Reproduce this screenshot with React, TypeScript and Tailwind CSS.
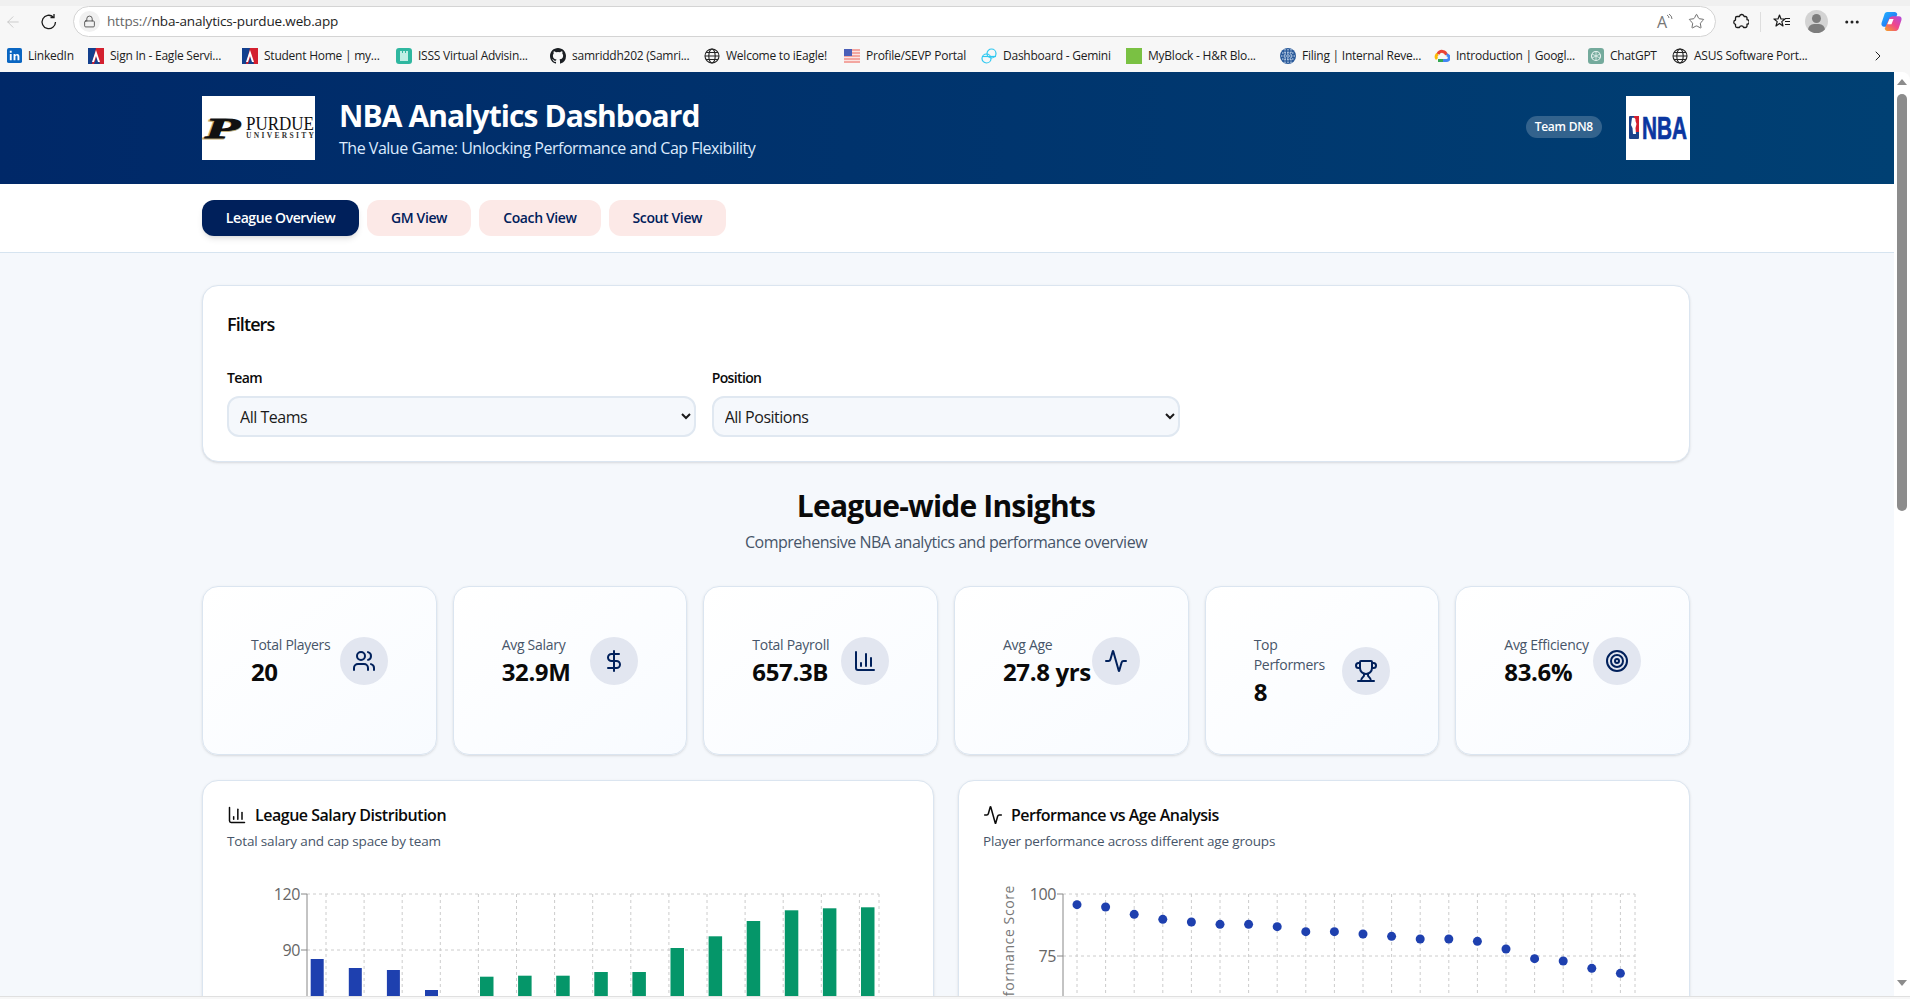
import { Activity, ChartColumn, ChevronRight, DollarSign, Lock, MoreHorizontal, Star, Target, Trophy, Users, ArrowLeft } from "lucide-react";
import type { ReactNode } from "react";

const Globe = () => (
  <svg width="16" height="16" viewBox="0 0 16 16" fill="none" stroke="#222" strokeWidth="1.1">
    <circle cx="8" cy="8" r="7" />
    <ellipse cx="8" cy="8" rx="3.2" ry="7" />
    <path d="M1 8h14M2 4.5h12M2 11.5h12" />
  </svg>
);

const AtlasIcon = () => (
  <svg width="16" height="16" viewBox="0 0 16 16">
    <rect width="16" height="16" fill="#13408e" />
    <path d="M8 0h8v16h-4L9 8 6 16H4z" fill="#d3202f" />
    <path d="M8 2l4 12h-2L8 8l-2 6H4z" fill="#fff" />
  </svg>
);

const bookmarks: { label: string; width: string; icon: ReactNode }[] = [
  {
    label: "LinkedIn",
    width: "w-[43px]",
    icon: (
      <svg width="15" height="15" viewBox="0 0 16 16">
        <rect width="16" height="16" rx="2" fill="#0a66c2" />
        <path d="M3 6.5h2V13H3zM3 3h2v2H3zM7 6.5h2v1c.5-.8 1.2-1.2 2-1.2 1.500 0 2.200 1 2.200 2.700v4h-2V9.500c0-.9-.3-1.400-1-1.400-.8 0-1.200.6-1.200 1.500V13H7z" fill="#fff" />
      </svg>
    ),
  },
  { label: "Sign In - Eagle Servi...", width: "w-[115px]", icon: <AtlasIcon /> },
  { label: "Student Home | my...", width: "w-[115px]", icon: <AtlasIcon /> },
  {
    label: "ISSS Virtual Advisin...",
    width: "w-[115px]",
    icon: (
      <svg width="16" height="16" viewBox="0 0 16 16">
        <rect width="16" height="16" rx="3" fill="#2fb7a0" />
        <path d="M4 3h2v2h1V3h2v2h1V3h2v10H4z" fill="#bfeee4" />
      </svg>
    ),
  },
  {
    label: "samriddh202 (Samri...",
    width: "w-[115px]",
    icon: (
      <svg width="16" height="16" viewBox="0 0 16 16" fill="#1b1f23">
        <path d="M8 0C3.580 0 0 3.580 0 8c0 3.540 2.290 6.530 5.470 7.590.4.070.55-.17.55-.38v-1.340c-2.230.48-2.700-1.070-2.700-1.070-.36-.92-.89-1.170-.89-1.170-.73-.5.05-.49.05-.49.8.060 1.230.82 1.230.82.710 1.220 1.870.87 2.330.66.070-.52.280-.87.510-1.070-1.780-.2-3.640-.89-3.640-3.950 0-.87.310-1.590.820-2.150-.080-.2-.360-1.020.080-2.120 0 0 .670-.21 2.200.820a7.700 7.700 0 0 1 4 0c1.530-1.040 2.200-.820 2.200-.820.440 1.100.160 1.920.080 2.120.510.560.820 1.270.820 2.150 0 3.070-1.870 3.750-3.650 3.950.290.250.540.730.540 1.480v2.200c0 .210.150.460.550.380A8.010 8.010 0 0 0 16 8c0-4.420-3.580-8-8-8z" />
      </svg>
    ),
  },
  { label: "Welcome to iEagle!", width: "w-[101px]", icon: <Globe /> },
  {
    label: "Profile/SEVP Portal",
    width: "w-[98px]",
    icon: (
      <svg width="16" height="16" viewBox="0 0 16 16">
        <rect y="1" width="16" height="14" fill="#f3a6a0" />
        <path d="M0 3.500h16M0 6.500h16M0 9.500h16M0 12.500h16" stroke="#fbe4e2" strokeWidth="1.200" />
        <rect y="1" width="8" height="7" fill="#4a5fb8" />
      </svg>
    ),
  },
  {
    label: "Dashboard - Gemini",
    width: "w-[106px]",
    icon: (
      <svg width="16" height="16" viewBox="0 0 16 16" fill="none" stroke="#2fc8f0" strokeWidth="1.200">
        <circle cx="10.500" cy="5.500" r="4.500" />
        <circle cx="5.500" cy="10.500" r="4.500" />
        <path d="M1 8.500h14" />
      </svg>
    ),
  },
  {
    label: "MyBlock - H&R Blo...",
    width: "w-[115px]",
    icon: <div className="h-4 w-4 bg-[#7ac143]" />,
  },
  {
    label: "Filing | Internal Reve...",
    width: "w-[115px]",
    icon: (
      <svg width="16" height="16" viewBox="0 0 16 16">
        <circle cx="8" cy="8" r="8" fill="#2a5a9a" />
        <path d="M2 5h12M1 8h14M2 11h12M5 1v14M8 1v14M11 1v14" stroke="#d7e4f3" strokeWidth="1" strokeDasharray="1.500 1" />
      </svg>
    ),
  },
  {
    label: "Introduction | Googl...",
    width: "w-[115px]",
    icon: (
      <svg width="16" height="16" viewBox="0 0 16 16" fill="none" strokeWidth="3">
        <path d="M3 11a3 3 0 0 1 1-5" stroke="#fbbc04" />
        <path d="M4 6a4.500 4.500 0 0 1 8.500 1" stroke="#ea4335" />
        <path d="M12.500 7a2.500 2.500 0 0 1 0 5.500H9" stroke="#4285f4" />
        <path d="M9 12.500H4" stroke="#34a853" />
      </svg>
    ),
  },
  {
    label: "ChatGPT",
    width: "w-[45px]",
    icon: (
      <svg width="16" height="16" viewBox="0 0 16 16" fill="none">
        <rect width="16" height="16" rx="3" fill="#74aa9c" />
        <circle cx="8" cy="8" r="4.500" stroke="#e6f2ef" strokeWidth="1.200" />
        <path d="M8 3.500v9M4 6l8 4M4 10l8-4" stroke="#e6f2ef" strokeWidth=".8" />
      </svg>
    ),
  },
  { label: "ASUS Software Port...", width: "w-[112px]", icon: <Globe /> },
];

const BrowserChrome = () => (
  <div className="bg-[#f7f7f7] shrink-0">
    <div className="h-[6px] bg-[#f0f0f0]" />
    <div className="flex items-center h-[31px]">
      <div className="w-[26px] flex justify-center">
        <ArrowLeft size={18} strokeWidth={1.1} className="text-[#c4c4c4]" />
      </div>
      <div className="w-[20px] ml-[13px] flex justify-center">
        <svg width="18" height="18" viewBox="0 0 18 18" fill="none" stroke="#1a1a1a" strokeWidth="1.300">
          <path d="M15.500 9a6.700 6.700 0 1 1-2.200-5" />
          <path d="M14 1v3.500h-3.500" />
        </svg>
      </div>
      <div className="ml-[14px] w-[1643px] h-[31px] bg-white border border-[#d4d4d4] rounded-full flex items-center pl-[5px] pr-[10px]">
        <div className="w-[21px] h-[21px] rounded-full bg-[#f1f1f1] flex items-center justify-center">
          <Lock size={13} strokeWidth={1.4} className="text-[#333]" />
        </div>
        <div className="ml-[7px] pt-[1px] text-[13.5px] leading-none text-[#1d1d1d] tracking-[-0.012em]">
          <span className="text-[#666]">https://</span>nba-analytics-purdue.web.app
        </div>
        <div className="ml-auto flex items-center gap-[13px]">
          <div className="flex items-start w-[18px] text-[16px] leading-none text-[#777]">
            A
            <svg width="7" height="9" viewBox="0 0 7 9" fill="none" stroke="#777" strokeWidth="1" className="shrink-0 -ml-[1px]">
              <path d="M1 1a3.500 3.500 0 0 1 2 3M3 0a6 6 0 0 1 3 5" />
            </svg>
          </div>
          <Star size={17} strokeWidth={1.2} className="text-[#555]" />
        </div>
      </div>
      <div className="ml-[14px] w-[20px] flex justify-center">
        <svg width="17" height="17" viewBox="0 0 17 17" fill="none" stroke="#1a1a1a" strokeWidth="1.300" strokeLinejoin="round">
          <path d="M6 3.500h1.500a2.300 2.300 0 0 1 4.400-.6c.2.2.2.4.2.6h1.400a1.500 1.500 0 0 1 1.500 1.500v1.700a2.200 2.200 0 0 1 0 4.400v1.900a1.500 1.500 0 0 1-1.500 1.500h-1.900a2.200 2.200 0 0 0-4.200 0H5a1.500 1.500 0 0 1-1.500-1.500v-1.700a2.200 2.200 0 0 1 0-4.300V5A1.500 1.500 0 0 1 5 3.500z" />
        </svg>
      </div>
      <div className="ml-[10px] w-px h-[20px] bg-[#dedede]" />
      <div className="ml-[11px] w-[20px] flex justify-center">
        <svg width="18" height="18" viewBox="0 0 18 18" fill="none" stroke="#1a1a1a" strokeWidth="1.200" strokeLinejoin="round">
          <path d="M6.500 2l1.500 4h4l-3.200 2.600 1.200 4.400-3.500-2.600L3 13l1.200-4.400L1 6h4z" />
          <path d="M12 8.500h5M12 11.500h5M12 5.500h5" />
        </svg>
      </div>
      <div className="relative ml-[13px] w-[23px] h-[23px] rounded-full bg-[#d3d3d3] overflow-hidden">
        <div className="absolute left-[7px] top-[4px] w-[9px] h-[9px] rounded-full bg-[#7d7d7d]" />
        <div className="absolute left-[3px] top-[14px] w-[17px] h-[12px] rounded-full bg-[#7d7d7d]" />
      </div>
      <div className="ml-[15px] w-[18px] flex justify-center">
        <MoreHorizontal size={18} strokeWidth={2} className="text-[#222]" />
      </div>
      <div className="ml-[20px]">
        <svg width="21" height="21" viewBox="0 0 20 20">
          <defs>
            <linearGradient id="cp1" x1="0" y1="0" x2="1" y2="1">
              <stop offset="0" stopColor="#1fb6ff" />
              <stop offset="1" stopColor="#2a5bf0" />
            </linearGradient>
            <linearGradient id="cp2" x1="0" y1="1" x2="1" y2="0">
              <stop offset="0" stopColor="#f5a623" />
              <stop offset="0.5" stopColor="#f0468c" />
              <stop offset="1" stopColor="#b14be0" />
            </linearGradient>
          </defs>
          <path d="M6 1h7c1.500 0 2 1 2.500 2L12 13c-.5 1.500-1.500 2-3 2H3c-2 0-3-1.500-2.500-3.500L3 4c.5-2 1.500-3 3-3z" fill="url(#cp1)" />
          <path d="M13 5h4c2 0 3 1.500 2.500 3.500L17 16c-.5 2-1.500 3-3 3H6c-1.500 0-2-1-2.500-2L8 7c.5-1.500 2-2 5-2z" fill="url(#cp2)" />
          <path d="M8 7.500h4l-2 5H6z" fill="#fff" />
        </svg>
      </div>
    </div>
    <div className="flex items-center h-[35px] pl-[6px] pt-[2px] relative">
      {bookmarks.map((b) => (
        <div key={b.label} className="flex items-center shrink-0 mr-[17px]">
          <div className="w-4 flex justify-center">{b.icon}</div>
          <div className={`${b.width} ml-[6px] text-[12px] leading-none text-[#1c1c1c] whitespace-nowrap tracking-[-0.02em]`}>{b.label}</div>
        </div>
      ))}
      <ChevronRight size={16} strokeWidth={1.5} className="absolute left-[1870px] text-[#222]" />
    </div>
  </div>
);

const PurdueLogo = () => (
  <svg width="113" height="64" viewBox="0 0 113 64" className="bg-white shrink-0 overflow-visible">
    <text x="1" y="43" fontFamily="Liberation Serif" fontWeight="700" fontStyle="italic" fontSize="30" fill="#c5b078" stroke="#c5b078" strokeWidth="1" textLength="37" lengthAdjust="spacingAndGlyphs">P</text>
    <text x="3" y="42" fontFamily="Liberation Serif" fontWeight="700" fontStyle="italic" fontSize="30" fill="#111" stroke="#111" strokeWidth="1" textLength="35" lengthAdjust="spacingAndGlyphs">P</text>
    <text x="44" y="34" fontFamily="Liberation Serif" fontSize="18" fill="#111" textLength="68" lengthAdjust="spacingAndGlyphs">PURDUE</text>
    <text x="44" y="42" fontFamily="Liberation Serif" fontWeight="700" fontSize="7.500" fill="#333" textLength="68">UNIVERSITY</text>
  </svg>
);

const NbaLogo = () => (
  <svg width="64" height="64" viewBox="0 0 64 64" className="bg-white shrink-0 overflow-visible">
    <rect x="3" y="20" width="10" height="23" rx="1" fill="#1d428a" />
    <rect x="8" y="20" width="5" height="16" fill="#d3202f" />
    <path d="M6 22c2-1 4 0 3.500 3l1 3-1 4 .5 6H7l-.5-6L5 29z" fill="#fff" />
    <text x="16" y="43" fontFamily="Liberation Sans" fontWeight="700" fontSize="31" fill="#0a36a0" stroke="#0a36a0" strokeWidth=".7" textLength="45" lengthAdjust="spacingAndGlyphs">NBA</text>
  </svg>
);

const tabs = [
  { label: "League Overview", active: true },
  { label: "GM View", active: false },
  { label: "Coach View", active: false },
  { label: "Scout View", active: false },
];

const stats = [
  { label: "Total Players", value: "20", Icon: Users },
  { label: "Avg Salary", value: "32.9M", Icon: DollarSign },
  { label: "Total Payroll", value: "657.3B", Icon: ChartColumn },
  { label: "Avg Age", value: "27.8 yrs", Icon: Activity },
  { label: "Top\nPerformers", value: "8", Icon: Trophy },
  { label: "Avg Efficiency", value: "83.6%", Icon: Target },
];

const StatCard = ({ label, value, Icon }: (typeof stats)[number]) => (
  <div className="bg-linear-to-br from-white to-[#f8fbff] border border-[#dbe5f0] rounded-2xl shadow-sm p-12 h-[169px]">
    <div className="flex items-center justify-between">
      <div className="min-w-0">
        <p className="text-[14px] leading-5 font-medium text-[#475569] tracking-[-0.02em] whitespace-pre">{label}</p>
        <p className="mt-[1px] text-[24px] leading-[31px] font-bold text-[#0a0a0a] tracking-[-0.015em] whitespace-nowrap">{value}</p>
      </div>
      <div className="w-12 h-12 rounded-full bg-[#e2e6f0] flex items-center justify-center shrink-0">
        <Icon size={24} strokeWidth={2} className="text-[#00205b]" />
      </div>
    </div>
  </div>
);

const SalaryChart = () => {
  const gridX = Array.from({ length: 15 }, (_, i) => 99 + i * 38.1);
  const blue = [959, 968, 970, 990];
  const green = [976.7, 975.7, 975.7, 972, 972, 948, 936.3, 921, 910.3, 908.3, 907.3];
  return (
    <svg width="680" height="200" viewBox="0 0 680 200" className="block">
      {gridX.map((x) => (
        <line key={x} x1={x} x2={x} y1="44" y2="200" stroke="#ccc" strokeDasharray="3 3" />
      ))}
      <line x1={652} x2={652} y1="44" y2="200" stroke="#ccc" strokeDasharray="3 3" />
      <line x1="80" x2="652" y1="44" y2="44" stroke="#ccc" strokeDasharray="3 3" />
      <line x1="80" x2="652" y1="100" y2="100" stroke="#ccc" strokeDasharray="3 3" />
      <line x1="80" x2="80" y1="44" y2="200" stroke="#888" />
      <line x1="74" x2="80" y1="44" y2="44" stroke="#888" />
      <line x1="74" x2="80" y1="100" y2="100" stroke="#888" />
      <text x="73" y="50" textAnchor="end" fontSize="16" letterSpacing="-0.4" fill="#666">120</text>
      <text x="73" y="106" textAnchor="end" fontSize="16" letterSpacing="-0.4" fill="#666">90</text>
      {blue.map((y, i) => (
        <rect key={i} x={83.700 + i * 38.1} y={y - 850} width="13" height="300" fill="#1e40af" />
      ))}
      {green.map((y, i) => (
        <rect key={i} x={253 + i * 38.1} y={y - 850} width="13.500" height="300" fill="#059669" />
      ))}
    </svg>
  );
};

const AgeChart = () => {
  const ys = [404, 411, 433, 448, 456, 463, 463, 470, 485, 485, 492, 499, 507, 507, 514, 537, 566, 573, 595, 610];
  const xs = ys.map((_, i) => 94 + i * 28.6);
  return (
    <svg width="680" height="200" viewBox="0 0 680 200" className="block">
      {xs.map((x) => (
        <line key={x} x1={x} x2={x} y1="44" y2="200" stroke="#ccc" strokeDasharray="3 3" />
      ))}
      <line x1="652" x2="652" y1="44" y2="200" stroke="#ccc" strokeDasharray="3 3" />
      <line x1="80" x2="652" y1="44" y2="44" stroke="#ccc" strokeDasharray="3 3" />
      <line x1="80" x2="652" y1="106" y2="106" stroke="#ccc" strokeDasharray="3 3" />
      <line x1="80" x2="80" y1="44" y2="200" stroke="#888" />
      <line x1="74" x2="80" y1="44" y2="44" stroke="#888" />
      <line x1="74" x2="80" y1="106" y2="106" stroke="#888" />
      <text x="73" y="50" textAnchor="end" fontSize="16" letterSpacing="-0.4" fill="#666">100</text>
      <text x="73" y="112" textAnchor="end" fontSize="16" letterSpacing="-0.4" fill="#666">75</text>
      <text transform="translate(31 35) rotate(-90)" textAnchor="end" fontSize="14" letterSpacing="0.6" fill="#777">Performance Score</text>
      {xs.map((x, i) => (
        <circle key={x} cx={x} cy={ys[i] / 3 - 80} r="4.500" fill="#1e40af" />
      ))}
    </svg>
  );
};

const ChartCard = ({ Icon, title, subtitle, children }: { Icon: typeof Users; title: string; subtitle: string; children: ReactNode }) => (
  <div className="bg-white border border-[#dbe5f0] rounded-2xl shadow-sm px-6 pt-6 h-[400px]">
    <div className="flex items-center gap-2">
      <Icon size={20} strokeWidth={1.8} className="text-[#0a0a0a]" />
      <h3 className="text-[16px] leading-5 font-semibold text-[#0a0a0a] tracking-[-0.03em]">{title}</h3>
    </div>
    <p className="mt-[6px] text-[13.5px] leading-5 text-[#475569] tracking-[-0.012em]">{subtitle}</p>
    <div className="mt-[-1px]">{children}</div>
  </div>
);

const Scrollbar = () => (
  <div className="w-[16px] shrink-0 bg-white flex flex-col items-center rounded-tr-lg">
    <div className="mt-[7px] w-0 h-0 border-l-[5px] border-r-[5px] border-b-[6px] border-l-transparent border-r-transparent border-b-[#8c8c8c]" />
    <div className="mt-[9px] w-[10px] h-[417px] rounded-full bg-[#8c8c8c]" />
    <div className="mt-auto mb-[10px] w-0 h-0 border-l-[5px] border-r-[5px] border-t-[6px] border-l-transparent border-r-transparent border-t-[#8c8c8c]" />
  </div>
);

export default function App() {
  return (
    <div className="h-[999px] w-[1910px] overflow-hidden flex flex-col bg-[#f7f7f7] font-['Open_Sans',sans-serif]">
      <BrowserChrome />
      <div className="flex h-[924px] shrink-0">
        <div className="w-[1894px] shrink-0 overflow-hidden bg-[#f5f8fc]">
          <header className="h-[112px] bg-linear-to-r from-[#002868] to-[#004073] flex items-center">
            <div className="w-[1488px] ml-[202px] flex items-center">
              <PurdueLogo />
              <div className="ml-[24px]">
                <h1 className="mt-[2px] text-[30px] leading-9 font-bold text-white tracking-[-0.03em]">NBA Analytics Dashboard</h1>
                <p className="mt-[2px] text-[16px] leading-6 text-[#dbeafe] tracking-[-0.03em]">The Value Game: Unlocking Performance and Cap Flexibility</p>
              </div>
              <div className="ml-auto flex items-center gap-6">
                <span className="h-[22px] px-[9px] mb-[2px] rounded-full bg-white/20 text-white text-[12px] font-semibold flex items-center tracking-[-0.02em]">Team DN8</span>
                <NbaLogo />
              </div>
            </div>
          </header>
          <nav className="h-[69px] bg-white border-b border-[#d6e4f0] flex items-start pt-4">
            <div className="ml-[202px] flex gap-2">
              {tabs.map((t) => (
                <button
                  key={t.label}
                  className={
                    t.active
                      ? "h-9 w-[157px] pb-[1px] rounded-xl bg-[#00205b] text-white text-[14px] font-semibold shadow-md tracking-[-0.03em]"
                      : "h-9 w-auto px-6 pb-[1px] rounded-xl bg-[#fce9e7] text-[#00205b] text-[14px] font-semibold tracking-[-0.027em]"
                  }
                >
                  {t.label}
                </button>
              ))}
            </div>
          </nav>
          <main className="w-[1488px] ml-[202px] pt-8">
            <section className="bg-white border border-[#dbe5f0] rounded-2xl shadow-sm p-6 h-[177px]">
              <h2 className="text-[18px] leading-7 font-semibold text-[#0a0a0a] tracking-[-0.05em]">Filters</h2>
              <div className="mt-[30px] grid grid-cols-3 gap-4">
                {[
                  { label: "Team", value: "All Teams" },
                  { label: "Position", value: "All Positions" },
                ].map((f) => (
                  <div key={f.label}>
                    <label className="block text-[14px] leading-5 font-semibold text-[#0a0a0a] tracking-[-0.045em] mb-[8px]">{f.label}</label>
                    <select className="w-full h-[41px] px-[7px] rounded-xl border-2 border-[#e0e8f1] bg-[#f5f8fc] text-[16px] text-[#1a1a1a] tracking-[-0.03em]">
                      <option>{f.value}</option>
                    </select>
                  </div>
                ))}
              </div>
            </section>
            <div className="mt-[24px] text-center">
              <h2 className="text-[30px] leading-10 font-bold text-[#0a0a0a] tracking-[-0.027em]">League-wide Insights</h2>
              <p className="mt-[4px] text-[16px] leading-6 text-[#475569] tracking-[-0.03em]">Comprehensive NBA analytics and performance overview</p>
            </div>
            <div className="mt-[32px] grid grid-cols-6 gap-4">
              {stats.map((s) => (
                <StatCard key={s.label} {...s} />
              ))}
            </div>
            <div className="mt-[25px] grid grid-cols-2 gap-6">
              <ChartCard Icon={ChartColumn} title="League Salary Distribution" subtitle="Total salary and cap space by team">
                <SalaryChart />
              </ChartCard>
              <ChartCard Icon={Activity} title="Performance vs Age Analysis" subtitle="Player performance across different age groups">
                <AgeChart />
              </ChartCard>
            </div>
          </main>
        </div>
        <Scrollbar />
      </div>
      <div className="h-[3px] shrink-0 border-t border-[#e0e0e0] bg-[#f7f7f7]" />
    </div>
  );
}
